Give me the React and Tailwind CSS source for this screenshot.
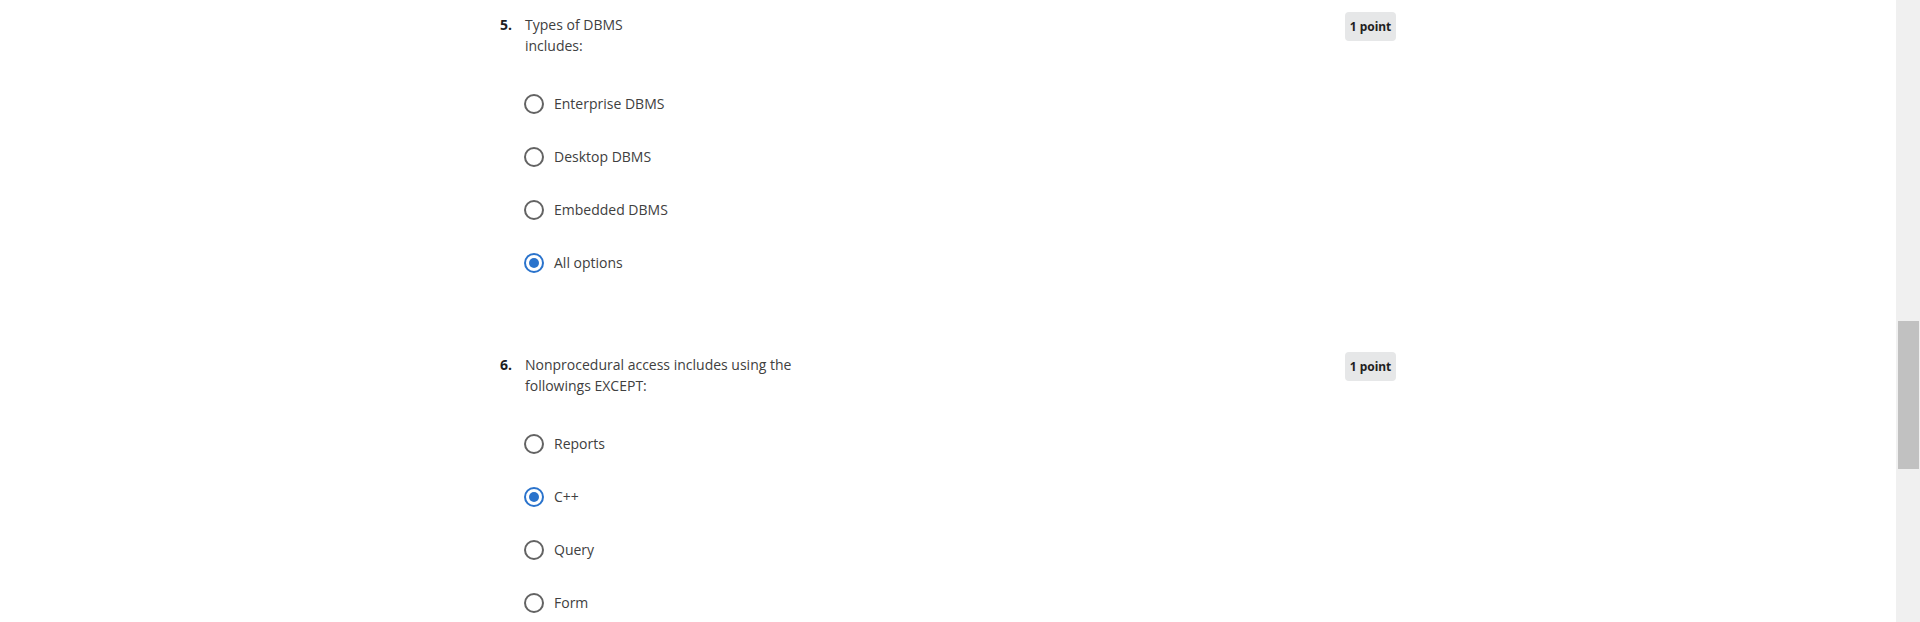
import React from "react";

function Radio({ checked }) {
  return checked ? (
    <span className="flex h-[20px] w-[20px] shrink-0 items-center justify-center rounded-full border-2 border-[#2a73cc]">
      <span className="h-[10px] w-[10px] rounded-full bg-[#2a73cc]" />
    </span>
  ) : (
    <span className="h-[20px] w-[20px] shrink-0 rounded-full border-2 border-[#636363]" />
  );
}

function Question({ num, lines, options, selected, className }) {
  return (
    <div className={className}>
      <div className="flex items-start justify-between">
        <div className="mt-[2px] flex">
          <div className="w-[25px] text-[14px] font-bold leading-[21px] text-[#1f1f1f]">{num}.</div>
          <div className="text-[14px] leading-[21px] text-[#404040]">
            {lines.map((l, i) => (
              <div key={i}>{l}</div>
            ))}
          </div>
        </div>
        <div
          className="flex h-[29px] w-[51px] items-center justify-center rounded-[4px] bg-[#e6e7e8] text-[12px] font-bold text-[#1f1f1f]"
          style={{ fontFamily: '"Source Sans Pro", "Noto Sans", sans-serif' }}
        >
          1 point
        </div>
      </div>
      <div className="mt-[21px] pl-[24px]">
        {options.map((o, i) => (
          <div key={o} className="flex h-[53px] items-center gap-[10px]">
            <Radio checked={i === selected} />
            <span className="text-[14px] text-[#404040]">{o}</span>
          </div>
        ))}
      </div>
    </div>
  );
}

export default function App() {
  return (
    <div
      className="flex h-[622px] w-full overflow-hidden bg-white"
      style={{ fontFamily: '"Open Sans", "Noto Sans", sans-serif' }}
    >
      <div className="flex-1">
        <div className="mx-auto w-[896px] pt-[12px]">
          <Question
            num="5"
            lines={["Types of DBMS", "includes:"]}
            options={["Enterprise DBMS", "Desktop DBMS", "Embedded DBMS", "All options"]}
            selected={3}
          />
          <Question
            className="mt-[63px]"
            num="6"
            lines={["Nonprocedural access includes using the", "followings EXCEPT:"]}
            options={["Reports", "C++", "Query", "Form"]}
            selected={1}
          />
        </div>
      </div>
      <div className="h-full w-[24px] shrink-0 bg-[#f0f0f0] pl-[2px]">
        <div className="mt-[321px] h-[148px] w-[21px] bg-[#c1c1c1]" />
      </div>
    </div>
  );
}
